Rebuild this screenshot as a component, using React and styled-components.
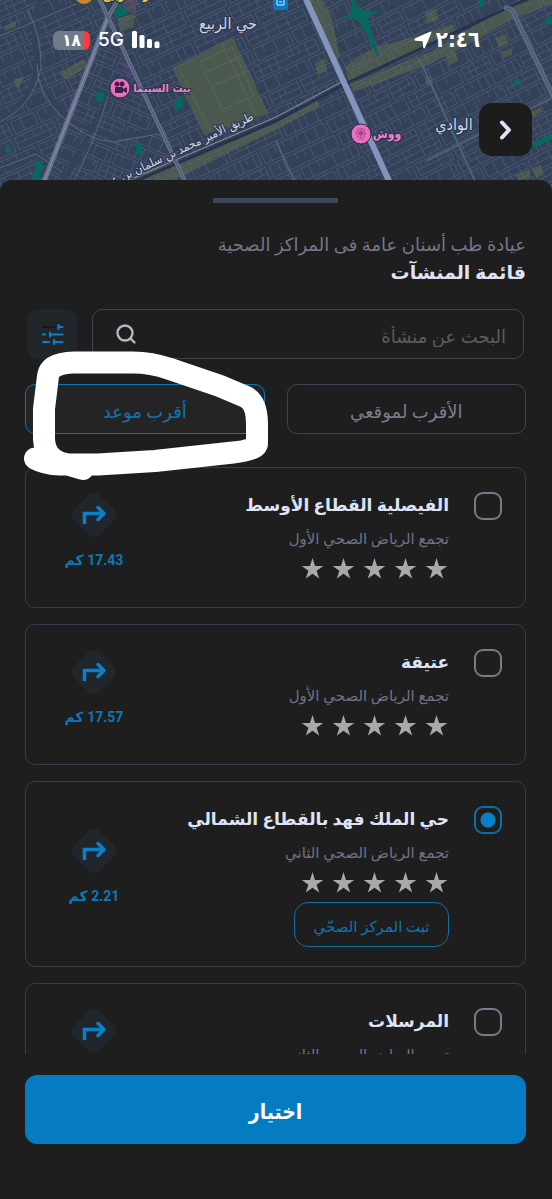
import React, { useState } from "react";
import styled, { createGlobalStyle } from "styled-components";

const arabic = `Roboto, "DejaVu Sans", sans-serif`;
const condensed = `"DejaVu Sans Condensed", "DejaVu Sans", sans-serif`;

const GlobalStyle = createGlobalStyle`
  *, *::before, *::after { box-sizing: border-box; }
  body { margin: 0; background: #1e1e1e; font-family: ${arabic}; color: #dfe4f5; }
  h1, p, ul { margin: 0; padding: 0; }
  ul { list-style: none; }
  button, input { font: inherit; }
`;

/* ---------- layout ---------- */
const Screen = styled.main`
  display: flex;
  flex-direction: column;
  height: 100vh;
  overflow: hidden;
  position: relative;
`;
const MapHeader = styled.header`
  position: relative;
  flex: none;
  height: 192px;
  overflow: hidden;
  background: #34425a;
`;
const MapCanvas = styled.svg`
  position: absolute;
  inset: 0;
  width: 100%;
  height: 100%;
`;
const StatusBar = styled.div`
  position: relative;
  display: flex;
  align-items: center;
  gap: 8px;
  height: 80px;
  padding: 0 72px 0 53px;
  color: #fff;
`;
const Battery = styled.span`
  width: 37px;
  height: 19px;
  border-radius: 6px;
  background: linear-gradient(90deg, #717a88 31px, #fb3b3b 31px);
  font-family: ${condensed};
  font-size: 17px;
  font-weight: 700;
  line-height: 19px;
  text-align: center;
`;
const Network = styled.span`
  font: 500 19px/24px Inter, sans-serif;
`;
const Clock = styled.time`
  display: flex;
  align-items: center;
  gap: 4px;
  margin-left: auto;
  font-family: ${condensed};
  font-size: 22px;
  font-weight: 700;
  line-height: 28px;
`;
const BackButton = styled.button`
  position: absolute;
  top: 103px;
  right: 20px;
  display: grid;
  place-items: center;
  width: 53px;
  height: 53px;
  padding: 0;
  border: 0;
  border-radius: 13px;
  background: #1c1c1c;
  color: #dfe4f5;
`;
const Sheet = styled.section`
  position: relative;
  flex: 1;
  min-height: 0;
  display: flex;
  flex-direction: column;
  margin-top: -12px;
  padding: 18px 26px 55px 25px;
  border-radius: 12px 12px 0 0;
  background: #1e1e1e;
`;
const Handle = styled.div`
  align-self: center;
  width: 125px;
  height: 5px;
  background: #3d4759;
`;
const Heading = styled.div`
  margin-top: 28px;
`;
const Service = styled.p`
  font-size: 18px;
  line-height: 28px;
  color: #73788a;
`;
const Title = styled.h1`
  font-size: 19px;
  font-weight: 700;
  line-height: 28px;
`;
const SearchRow = styled.form`
  display: flex;
  gap: 15px;
  margin-top: 22px;
  padding: 0 2px;
`;
const SearchBox = styled.label`
  flex: 1;
  display: flex;
  align-items: center;
  height: 50px;
  padding: 0 17px 0 20px;
  border: 1px solid #3d4553;
  border-radius: 10px;
`;
const SearchInput = styled.input`
  flex: 1;
  min-width: 0;
  height: 40px;
  padding: 4px 0 0;
  line-height: 36px;
  border: 0;
  outline: 0;
  background: none;
  color: #dfe4f5;
  font-size: 18px;
  &::placeholder { color: #5d5d5f; opacity: 1; line-height: 36px; }
`;
const FilterButton = styled.button`
  display: grid;
  place-items: center;
  width: 50px;
  height: 50px;
  padding: 0;
  border: 0;
  border-radius: 12px;
  background: #20262a;
`;
const Tabs = styled.div`
  position: relative;
  display: flex;
  gap: 22px;
  margin-top: 25px;
`;
const Tab = styled.button`
  flex: 1;
  height: 50px;
  padding: 4px 0 0;
  border: 1px solid ${(p) => (p.$active ? "#0f74b4" : "#3d4553")};
  border-radius: 10px;
  background: ${(p) => (p.$active ? "#242424" : "transparent")};
  color: ${(p) => (p.$active ? "#0f74b4" : "#7a7e90")};
  font-size: 18px;
`;
const Marker = styled.svg`
  position: absolute;
  top: -45px;
  left: -25px;
  pointer-events: none;
`;
const List = styled.ul`
  flex: 1;
  min-height: 0;
  display: flex;
  flex-direction: column;
  gap: 16px;
  margin-top: 33px;
  overflow: hidden;
`;
const Card = styled.li`
  flex: none;
  display: flex;
  padding: 23px 23px 19px 30px;
  border: 1px solid #363d4b;
  border-radius: 10px;
`;
const Pick = styled.input`
  appearance: none;
  flex: none;
  width: 28px;
  height: 28px;
  margin: 1px 0 0 25px;
  border: 2px solid #777a88;
  border-radius: 9px;
  &:checked {
    border-color: #0f6ea8;
    background: radial-gradient(circle, #0880c8 7px, transparent 8px);
  }
`;
const Details = styled.div`
  flex: 1;
  min-width: 0;
  display: flex;
  flex-direction: column;
  align-items: flex-start;
`;
const Name = styled.label`
  font-size: 17px;
  font-weight: 700;
  line-height: 28px;
`;
const Cluster = styled.p`
  margin-top: 8px;
  font-size: 15px;
  line-height: 24px;
  color: #6f7384;
`;
const Stars = styled.div`
  display: flex;
  gap: 7px;
  margin: 6px 0 7px;
`;
const PinButton = styled.button`
  width: 155px;
  height: 45px;
  padding: 4px 0 0;
  border: 1px solid #0f6ea8;
  border-radius: 14px;
  background: none;
  color: #0f74b4;
  font-size: 15px;
`;
const Route = styled.a`
  align-self: center;
  display: flex;
  flex-direction: column;
  align-items: center;
  gap: 14px;
  width: 76px;
  padding-bottom: 20px;
  color: #0b78bc;
  font-size: 14px;
  font-weight: 700;
  line-height: 16px;
  text-decoration: none;
  white-space: nowrap;
`;
const Submit = styled.button`
  flex: none;
  height: 69px;
  margin-top: 21px;
  padding: 4px 0 0;
  border: 0;
  border-radius: 12px;
  background: #057bc1;
  color: #fff;
  font-family: ${condensed};
  font-size: 21px;
  font-weight: 700;
`;

/* ---------- map ---------- */
function random(seed) {
  let s = seed;
  return () => ((s = (s * 16807) % 2147483647) / 2147483647);
}

function streets(seed, row) {
  const r = random(seed);
  let d = "";
  for (let y = -260; y < 260; y += row + 3) {
    let x = -380;
    while (x < 380) {
      const len = 24 + Math.floor(r() * 50);
      const h = row;
      d += `M${x} ${y}h${len}v${h}h${-len}z`;
      if (r() > 0.5) d += `M${x} ${y + h / 2}h${len}`;
      for (let t = 5 + r() * 6; t < len - 3; t += 5 + r() * 9) {
        const half = r() > 0.6;
        d += `M${x + Math.round(t)} ${y}v${half ? h / 2 : h}`;
      }
      x += len + 4;
    }
  }
  return d;
}

const districts = [
  { id: "west", area: "0,0 100,0 108,17 42,180 42,192 0,192", turn: -24, seed: 71, row: 13 },
  { id: "middle", area: "108,17 190,192 38,192", turn: 23, seed: 913, row: 12 },
  { id: "centre", area: "117,0 306,0 392,192 190,192 108,17", turn: -25, seed: 337, row: 13 },
  { id: "east", area: "306,0 552,0 552,192 392,192", turn: -27, seed: 5821, row: 13 },
];

const parks = [
  "172,68 233,37 268,113 204,135",
  "127,180 276,123 316,100 320,106 276,130 150,192 105,192",
  "345,66 376,47 420,35 452,24 456,30 350,84",
  "350,84 430,52 506,8 552,-6 552,4 515,18 430,64 354,92",
  "59,74 83,59 88,66 66,80", "118,18 135,14 134,27 120,32",
  "13,79 24,77 18,90", "4,27 16,21 16,28 6,32",
  "425,12 436,9 439,20 427,24", "445,55 455,51 458,61 449,66",
  "425,78 431,76 433,84 427,86", "495,38 506,34 508,44 499,48",
  "501,52 512,48 512,55 503,58", "303,0 322,0 331,15 340,57 336,62",
  "315,63 325,58 327,71 318,75", "515,175 530,169 530,178 519,180",
  "532,168 541,165 543,175 536,178", "531,112 541,107 542,112 533,117",
];
const greens = [
  "113,13 122,3 128,14 116,18", "97,93 103,91 104,103 96,101",
  "135,144 140,143 144,154 138,155", "174,102 183,96 183,107 175,112",
  "5,148 9,145 11,151 6,153", "36,162 44,160 40,180 33,180",
  "514,80 520,79 522,84 515,86", "545,18 552,16 552,24 547,25",
  "478,0 484,0 485,6 479,7", "532,143 552,133 552,139 534,148",
];

function MapDrawing() {
  return (
    <MapCanvas viewBox="0 0 552 192" preserveAspectRatio="xMidYMid slice" aria-hidden="true">
      <defs>
        {districts.map((d) => (
          <clipPath id={d.id} key={d.id}><polygon points={d.area} /></clipPath>
        ))}
      </defs>
      <rect width="552" height="192" fill="#334159" />
      <g fill="#4b584d">{parks.map((p) => <polygon key={p} points={p} />)}</g>
      <g fill="#4a416b">
        <polygon points="72,88 80,92 72,127 66,125" />
        <polygon points="120,63 128,58 135,73 128,78" />
        <polygon points="160,158 168,153 173,160 163,165" />
      </g>
      <polygon points="124,0 138,0 135,14 124,10" fill="#51485c" />
      {districts.map((d) => (
        <g key={d.id} clipPath={`url(#${d.id})`}>
          <path d={streets(d.seed, d.row)} transform={`translate(276 96) rotate(${d.turn})`} fill="none" stroke="#60708d" strokeOpacity=".55" strokeWidth="0.8" />
        </g>
      ))}
      <polygon points="174,70 232,40 266,112 205,133" fill="#4b584d" fillOpacity=".85" />
      <path d="M181 72L211 132M222 44l34 71M200 62l22 48 32-15-22-48zM206 72l34-15M213 86l34-15" fill="none" stroke="#65725a" strokeOpacity=".6" />
      <g fill="#07685d">{greens.map((p) => <polygon key={p} points={p} />)}</g>
      <path d="M351 0q2 10-1 13-3 3-10 4 14 0 18 4 7 8 19 36l2-1Q370 27 368 18q4-4 14-7-14 2-19-1-6-3-8-10z" fill="#07685d" />
      <g fill="none" strokeLinecap="round">
        <path d="M0 36L76 4M40 0q-10 34-2 60-4 42-38 62M0 168l36-14 26 18M45 90q25 36 40 36l32 11 40-6M108 96q-20 44-48 90" stroke="#334159" strokeWidth="5" />
        <path d="M0 36L76 4M28 10q14 28 13 58-8 38-41 54M37 64q0 28 23 51 27 26 54 27l44-8M0 168l36-14 26 18M108 96q-14 50-40 96" stroke="#586987" />
        <path d="M110 192L276 121 345 84 516 4 526 0" stroke="#27334b" strokeWidth="3" />
        <path d="M110 188L276 117 345 80" stroke="#8b93a5" />
        <path d="M108 17L40 192" stroke="#69738d" strokeWidth="5" />
        <path d="M108 17L40 192" stroke="#848faa" />
        <path d="M100 0L190 192M118 0l-10 17" stroke="#69738d" strokeWidth="4" />
        <path d="M100 0L190 192M118 0l-10 17" stroke="#46536d" />
        <path d="M506 8q8 0 10 10L556 102" stroke="#5c6985" strokeWidth="5" />
        <path d="M506 8q8 0 10 10L556 102" stroke="#46536d" />
        <path d="M276 141l18 39M420 60l60 132M428 160l124-62" stroke="#50607c" strokeWidth="2" />
        <path d="M305-3L394 192" stroke="#8594bd" strokeWidth="6" />
      </g>
      <circle cx="84" cy="-5" r="9" fill="#c8862e" />
      <rect x="273" y="-7" width="15" height="17" rx="3" fill="#0879c2" />
      <path d="M277 0v5h7V0M279 2h3" stroke="#d9edfa" fill="none" />
      <g stroke="#2e2e48" strokeWidth="1">
        <circle cx="120" cy="88" r="10" fill="#ea6fc0" />
        <circle cx="361" cy="134" r="10" fill="#ea6fc0" />
      </g>
      <g fill="#42213e">
        <circle cx="117" cy="84" r="2.5" /><circle cx="122" cy="84" r="2.5" />
        <rect x="115" y="87" width="8" height="6" rx="1" /><path d="M123 89l4-2v6l-4-2z" />
      </g>
      <g stroke="#9b3d7c" fill="none">
        <circle cx="361" cy="133" r="4.5" strokeDasharray="2 1" /><circle cx="361" cy="133" r="2" />
        <path d="M356 133h10M361 128v10M357 129l8 8M365 129l-8 8M358 139h6" strokeWidth=".7" />
      </g>
      <g fontFamily={condensed} direction="rtl" textAnchor="middle" stroke="#2b354b" strokeWidth="2" paintOrder="stroke" fill="#cfd7ea">
        <text x="228" y="29" fontSize="16">حي الربيع</text>
        <text x="454" y="130" fontSize="16">الوادي</text>
        <text x="162" y="92" fontSize="11" fontWeight="700" fill="#ee83ca">بيت السينما</text>
        <text x="387" y="138" fontSize="12" fontWeight="700" fill="#ee83ca">ووش</text>
        <text x="134" y="-1" fontSize="12" fontWeight="700" fill="#e8d44c">منتزه الربيع</text>
        <text transform="translate(180 154) rotate(-25)" fontSize="12">طريق الأمير محمد بن سلمان بن عبد</text>
      </g>
    </MapCanvas>
  );
}

/* ---------- icons ---------- */
const SignalIcon = () => (
  <svg width="28" height="18" viewBox="0 0 28 18" fill="#fff" aria-hidden="true">
    <rect width="5" height="17" rx="1.5" /><rect x="7.500" y="4" width="5" height="13" rx="1.500" />
    <rect x="15" y="8" width="5" height="9" rx="1.500" /><rect x="22.500" y="10.500" width="5" height="6.500" rx="1.500" />
  </svg>
);
const LocationIcon = () => (
  <svg width="18" height="18" viewBox="0 0 18 18" fill="#fff" aria-hidden="true">
    <path d="M1 7.500L16 .800q1.800-.6 1.300 1.200L11 16.800q-1 1.400-1.800-.2L8.600 10.200 1.800 9.800Q-.6 9.200 1 7.500z" />
  </svg>
);
const ChevronIcon = () => (
  <svg width="14" height="22" viewBox="0 0 14 22" fill="none" stroke="currentColor" strokeWidth="4" strokeLinecap="round" strokeLinejoin="round" aria-hidden="true">
    <path d="M3 3.500l7 7.500-7 7.500" />
  </svg>
);
const SearchIcon = () => (
  <svg width="26" height="26" viewBox="0 0 26 26" fill="none" stroke="#b4b8c6" strokeWidth="2.400" strokeLinecap="round" aria-hidden="true">
    <circle cx="12" cy="12" r="7.500" /><path d="M17.500 17.500l4 4" />
  </svg>
);
const FilterIcon = () => (
  <svg width="24" height="24" viewBox="0 0 24 24" fill="none" strokeWidth="2.200" strokeLinecap="round" aria-hidden="true">
    <path d="M3 5h11" stroke="#15191c" />
    <path d="M18.500 5h4M18.500 3v4M3 12.500h2M10 12.500h12.500M10 10.500v4M3 20h6M14 20h8.500M14 18v4" stroke="#0b80c7" />
  </svg>
);
const StarIcon = () => (
  <svg width="24" height="24" viewBox="0 0 24 24" fill="#a9a9a9" aria-hidden="true">
    <path d="M11.500 1l2.500 7.900h8.300L15.600 13.700l2.600 7.900L11.500 16.700l-6.700 4.900 2.600-7.900L.7 8.900h8.300z" />
  </svg>
);
const RouteIcon = () => (
  <svg width="46" height="46" viewBox="0 0 46 46" fill="none" aria-hidden="true">
    <rect x="5" y="5" width="36" height="36" rx="8" transform="rotate(45 23 23)" fill="#20272c" />
    <path d="M13.500 32V21.500H32" stroke="#0b80c7" strokeWidth="3.500" />
    <path d="M27 15.500l6 6-6 6" stroke="#0b80c7" strokeWidth="3.500" strokeLinecap="round" strokeLinejoin="round" />
  </svg>
);

/* ---------- data ---------- */
const facilities = [
  { id: "faisaliyah", name: "الفيصلية القطاع الأوسط", cluster: "تجمع الرياض الصحي الأول", distance: "17.43" },
  { id: "atiqah", name: "عتيقة", cluster: "تجمع الرياض الصحي الأول", distance: "17.57" },
  { id: "kingfahd", name: "حي الملك فهد بالقطاع الشمالي", cluster: "تجمع الرياض الصحي الثاني", distance: "2.21" },
  { id: "mursalat", name: "المرسلات", cluster: "تجمع الرياض الصحي الثاني", distance: "3.05" },
];

function Facility({ item, checked, onPick }) {
  return (
    <Card>
      <Pick type="radio" name="facility" id={item.id} checked={checked} onChange={onPick} />
      <Details>
        <Name htmlFor={item.id}>{item.name}</Name>
        <Cluster>{item.cluster}</Cluster>
        <Stars>{[1, 2, 3, 4, 5].map((n) => <StarIcon key={n} />)}</Stars>
        {checked && <PinButton type="button">ثبت المركز الصحّي</PinButton>}
      </Details>
      <Route href={`#${item.id}`}>
        <RouteIcon />
        <span>{item.distance} كم</span>
      </Route>
    </Card>
  );
}

export default function App() {
  const [picked, setPicked] = useState("kingfahd");
  const [sort, setSort] = useState("soonest");
  return (
    <Screen lang="ar">
      <GlobalStyle />
      <MapHeader>
        <MapDrawing />
        <StatusBar>
          <Battery>١٨</Battery>
          <Network>5G</Network>
          <SignalIcon />
          <Clock><LocationIcon /><span>٢:٤٦</span></Clock>
        </StatusBar>
        <BackButton type="button" aria-label="رجوع"><ChevronIcon /></BackButton>
      </MapHeader>
      <Sheet dir="rtl">
        <Handle />
        <Heading>
          <Service>عيادة طب أسنان عامة فى المراكز الصحية</Service>
          <Title>قائمة المنشآت</Title>
        </Heading>
        <SearchRow onSubmit={(e) => e.preventDefault()}>
          <SearchBox>
            <SearchInput type="text" placeholder="البحث عن منشأة" aria-label="البحث عن منشأة" />
            <SearchIcon />
          </SearchBox>
          <FilterButton type="button" aria-label="تصفية"><FilterIcon /></FilterButton>
        </SearchRow>
        <Tabs>
          <Tab type="button" $active={sort === "nearest"} onClick={() => setSort("nearest")}>الأقرب لموقعي</Tab>
          <Tab type="button" $active={sort === "soonest"} onClick={() => setSort("soonest")}>أقرب موعد</Tab>
          <Marker width="290" height="150" viewBox="0 340 290 150" fill="none" stroke="#fff" strokeWidth="22" strokeLinecap="round" strokeLinejoin="round" aria-hidden="true">
            <path d="M35 459.500Q45 465 60 465.500H98L155 462 233 453.500Q257 451 257 444V425Q257 404 246 398L220 387 170 370Q151 363.500 133 363.500H74Q50 364 48 377L44 410V440Q45 461 66 465L83 470" />
          </Marker>
        </Tabs>
        <List>
          {facilities.map((item) => (
            <Facility key={item.id} item={item} checked={picked === item.id} onPick={() => setPicked(item.id)} />
          ))}
        </List>
        <Submit type="button">اختيار</Submit>
      </Sheet>
    </Screen>
  );
}
